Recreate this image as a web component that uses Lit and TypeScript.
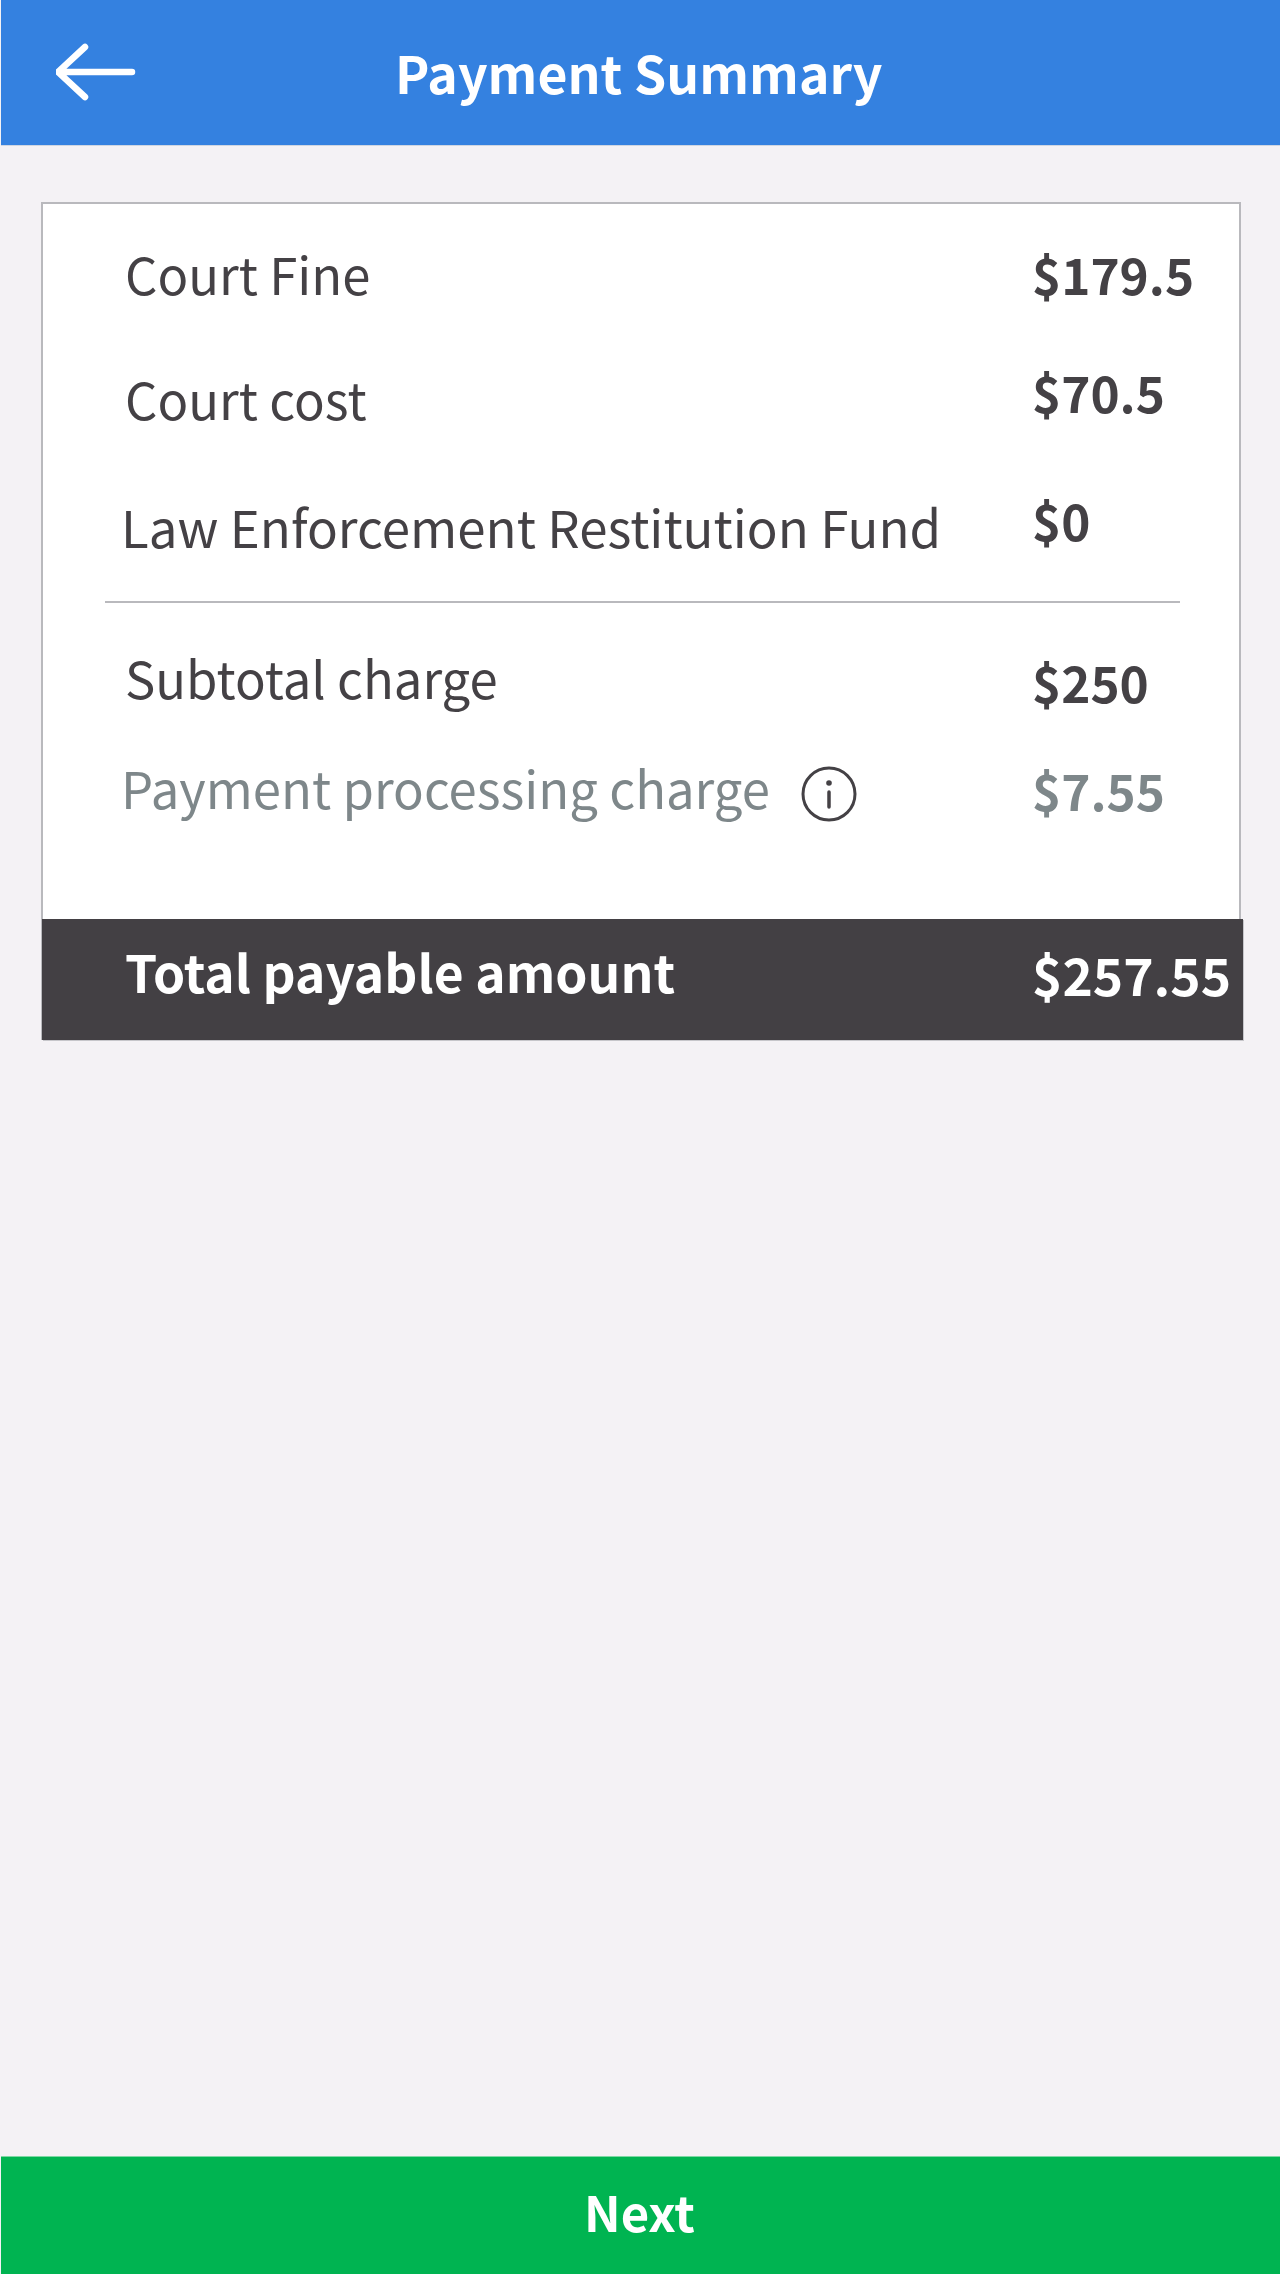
import { LitElement, html, css } from "lit";
import { customElement } from "lit/decorators.js";

@customElement("app-root")
export class AppRoot extends LitElement {
  static styles = css`
    :host {
      display: flex;
      flex-direction: column;
      width: 1280px;
      height: 2274px;
      box-sizing: border-box;
      padding-left: 1px;
      background: #f4f2f5;
      font-family: "Noto Sans CJK KR", "Noto Sans", sans-serif;
      color: #444145;
      font-size: 50.8px;
      line-height: 60px;
    }
    .header {
      height: 145px;
      flex: none;
      background: #3481e0;
      border-bottom: 1px solid #cfd6e2;
      position: relative;
      color: #fff;
    }
    .back {
      position: absolute;
      left: 55px;
      top: 42px;
      width: 84px;
      height: 60px;
    }
    .title {
      padding: 42px 0 0 394px;
      font-weight: 700;
      font-size: 51.7px;
      white-space: nowrap;
    }
    .main {
      flex: 1;
      padding: 56px 0 0 40px;
    }
    .card {
      width: 1200px;
      box-sizing: border-box;
      background: #fff;
      border: solid #b9b9bd;
      border-width: 2px 2px 0 2px;
      height: 838px;
      display: flex;
      flex-direction: column;
    }
    .list {
      flex: 1;
    }
    .row {
      display: grid;
      grid-template-columns: 989px auto;
      white-space: nowrap;
    }
    .val { font-weight: 700; font-size: 49.5px; }
    .label { padding-left: 82px; }
    .label.x0 { margin-left: -4px; }
    .r1 { height: 124px; }
    .r2 { height: 127px; }
    .r3 { height: 146px; }
    .r3 .label { font-size: 51px; }
    .r4 { height: 110px; }
    .r1 .label { padding-top: 39px; }
    .r1 .val { padding-top: 40px; }
    .r2 .label { padding-top: 40px; }
    .r2 .val { padding-top: 34px; }
    .r3 .label { padding-top: 41px; }
    .r3 .val { padding-top: 35px; }
    .r4 .label { padding-top: 44px; }
    .r4 .val { padding-top: 49px; }
    .r5 .label, .r5 .val { color: #7e878a; }
    .r5 .label { padding-top: 44px; display: flex; align-items: flex-start; }
    .r5 .val { padding-top: 47px; }
    .rule {
      height: 2px;
      background: #b9b9bd;
      margin: 0 59px 0 62px;
    }
    .info {
      width: 56px;
      height: 56px;
      margin: 9px 0 0 31px;
      flex: none;
    }
    .total {
      flex: none;
      width: 1201px;
      height: 121px;
      margin-left: -1px;
      background: #434044;
      box-shadow: 1px 1px 0 #c6c6ca;
      color: #fff;
      display: grid;
      grid-template-columns: 990px auto;
      white-space: nowrap;
      font-size: 51.5px;
      font-weight: 700;
    }
    .total .label { padding: 22px 0 0 83px; }
    .total .val { padding-top: 25px; font-size: 51.5px; }
    .next {
      flex: none;
      height: 118px;
      border-top: 1px solid #7fd8a4;
      background: #00b451;
      color: #fff;
      text-align: center;
      font-weight: 700;
      font-size: 49px;
      padding-top: 24px;
      padding-right: 2px;
      box-sizing: border-box;
    }
  `;

  render() {
    return html`
      <div class="header">
        <svg class="back" viewBox="0 0 84 60" fill="none" stroke="#fff" stroke-width="6.5" stroke-linecap="round" stroke-linejoin="round">
          <path d="M2 30H76M29 5L2 30L29 55"/>
        </svg>
        <div class="title">Payment Summary</div>
      </div>
      <div class="main">
        <div class="card">
          <div class="list">
            <div class="row r1"><div class="label">Court Fine</div><div class="val">$179.5</div></div>
            <div class="row r2"><div class="label">Court cost</div><div class="val">$70.5</div></div>
            <div class="row r3"><div class="label x0">Law Enforcement Restitution Fund</div><div class="val">$0</div></div>
            <div class="rule"></div>
            <div class="row r4"><div class="label">Subtotal charge</div><div class="val">$250</div></div>
            <div class="row r5"><div class="label x0">Payment processing charge
              <svg class="info" viewBox="0 0 56 56" fill="none" stroke="#444145" stroke-width="3">
                <circle cx="28" cy="28" r="26"/>
                <path d="M28 26V41" stroke-linecap="round" stroke-width="3.5"/>
                <circle cx="28" cy="17" r="2.8" fill="#444145" stroke="none"/>
              </svg></div><div class="val">$7.55</div></div>
          </div>
          <div class="total"><div class="label">Total payable amount</div><div class="val">$257.55</div></div>
        </div>
      </div>
      <div class="next">Next</div>
    `;
  }
}
